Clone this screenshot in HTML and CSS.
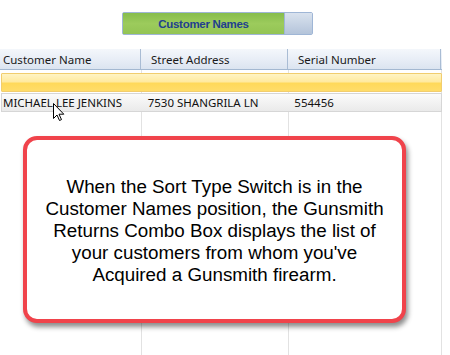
FILE: index.html
```html
<!DOCTYPE html>
<html>
<head>
<meta charset="utf-8">
<link rel="stylesheet" href="styles.css">
</head>
<body>
<div class="page">
  <div class="toggle-wrap">
    <div class="toggle">
      <div class="toggle-label">Customer Names</div>
      <div class="toggle-knob"></div>
    </div>
  </div>
  <div class="grid">
    <div class="header">
      <div class="hcell c1">Customer Name</div>
      <div class="hcell c2">Street Address</div>
      <div class="hcell c3">Serial Number</div>
    </div>
    <div class="body">
      <div class="row row-selected"></div>
      <div class="row row-data">
        <div class="cell c1">MICHAEL LEE JENKINS</div>
        <div class="cell c2">7530 SHANGRILA LN</div>
        <div class="cell c3">554456</div>
      </div>
    </div>
  </div>
  <svg class="cursor" width="12" height="19" viewBox="0 0 12 19">
    <path d="M0.5 0.5 L0.5 15.5 L4 12 L6.5 17.5 L8.5 16.6 L6 11.2 L10.8 11.2 Z" fill="#fff" stroke="#000" stroke-width="1" stroke-linejoin="miter"/>
  </svg>
  <div class="callout">
    <p>When the Sort Type Switch is in the Customer Names position, the Gunsmith Returns Combo Box displays the list of your customers from whom you've Acquired a Gunsmith firearm.</p>
  </div>
</div>
</body>
</html>
```
FILE: styles.css
```css
html, body {
  margin: 0;
  padding: 0;
  background: #ffffff;
}
.page {
  position: relative;
  width: 450px;
  height: 355px;
  overflow: hidden;
  font-family: "Noto Sans", "Open Sans", sans-serif;
}
.toggle-wrap {
  height: 49px;
  padding-top: 12px;
  box-sizing: border-box;
}
.toggle {
  margin-left: 122px;
  width: 191px;
  height: 23px;
  box-sizing: border-box;
  display: flex;
  border: 1px solid #9fb6d6;
  border-radius: 2px;
}
.toggle-label {
  flex: 1;
  background: linear-gradient(#86bd4c, #9ccb5c 50%, #93c454);
  color: #213f8e;
  font-family: "Liberation Sans", Arial, sans-serif;
  font-weight: bold;
  font-size: 11.5px;
  display: flex;
  align-items: center;
  justify-content: center;
  letter-spacing: -0.3px;
}
.toggle-knob {
  width: 27px;
  border-left: 1px solid #9fb6d6;
  background: linear-gradient(#d9e2ee, #b4c4da);
}
.grid {
  width: 442px;
  height: 306px;
  background-image:
    linear-gradient(#e2e2e2, #e2e2e2),
    linear-gradient(#e2e2e2, #e2e2e2),
    linear-gradient(#e2e2e2, #e2e2e2);
  background-size: 1px 100%, 1px 100%, 1px 100%;
  background-position: 141px 0, 288px 0, 441px 0;
  background-repeat: no-repeat;
}
.header {
  display: flex;
  height: 20px;
  border-bottom: 1px solid #a3b8d1;
  background: linear-gradient(#f4f7fb, #e6ecf5 60%, #dbe4f0);
  font-size: 11.5px;
  color: #1a1a1a;
}
.hcell {
  box-sizing: border-box;
  display: flex;
  align-items: center;
  padding-left: 3px;
  border-right: 1px solid #a9bcd4;
}
.c1 { width: 141px; }
.c2 { width: 147px; padding-left: 10px; }
.c3 { width: 153px; padding-left: 10px; }
.body {
  padding-top: 3px;
  padding-left: 1px;
}
.row {
  width: 441px;
  box-sizing: border-box;
  height: 19px;
}
.row-selected {
  background: linear-gradient(#fff4c4, #ffeaa0 45%, #ffd95a 55%, #ffdd6a);
  border: 1px solid #f1cd6e;
  border-radius: 1px;
}
.row-data {
  margin-top: 1px;
  height: 19px;
  display: flex;
  background: linear-gradient(#fbfbfb, #eaeaea);
  border: 1px solid #d6d6d6;
  font-size: 11.5px;
  color: #111;
}
.cell {
  box-sizing: border-box;
  display: flex;
  align-items: center;
  padding-left: 1px;
  white-space: nowrap;
}
.row-data .c1 { width: 140px; }
.row-data .c2 { width: 147px; padding-left: 6px; }
.row-data .c3 { width: 153px; padding-left: 6px; }
.cursor {
  position: absolute;
  left: 53px;
  top: 103px;
}
.callout {
  position: absolute;
  left: 23px;
  top: 136px;
  width: 383px;
  height: 187px;
  box-sizing: border-box;
  border: 4px solid #f0434b;
  border-radius: 14px;
  background: #ffffff;
  box-shadow: 2px 4px 5px rgba(0,0,0,0.45);
  display: flex;
  align-items: center;
  justify-content: center;
}
.callout p {
  margin: 0;
  padding: 2px 8px 0;
  text-align: center;
  font-family: "Liberation Sans", Arial, sans-serif;
  font-size: 18.8px;
  line-height: 22px;
  color: #000;
}
```
